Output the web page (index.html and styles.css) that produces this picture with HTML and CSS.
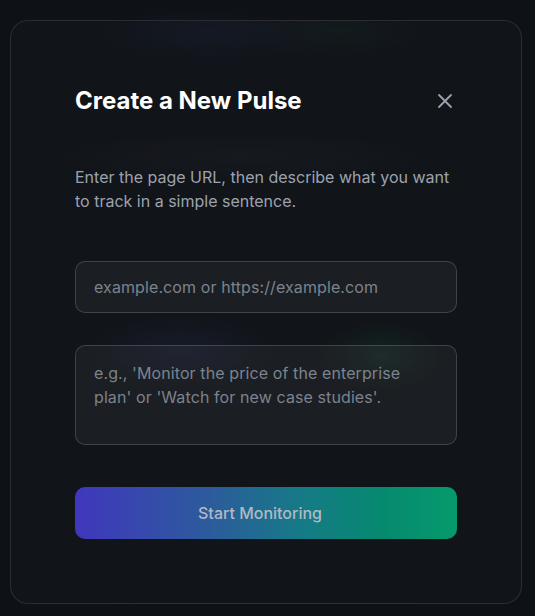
FILE: index.html
```html
<!DOCTYPE html>
<html lang="en">
<head>
<meta charset="utf-8">
<title>Create a New Pulse</title>
<link rel="stylesheet" href="styles.css">
</head>
<body>
<div class="overlay">
  <div class="modal">
    <div class="modal-header">
      <h2 class="modal-title">Create a New Pulse</h2>
      <button class="close-btn" aria-label="Close">
        <svg width="16" height="16" viewBox="0 0 16 16" fill="none" stroke="currentColor" stroke-width="1.8" stroke-linecap="round"><path d="M2 2L14 14M14 2L2 14"/></svg>
      </button>
    </div>
    <p class="modal-desc">Enter the page URL, then describe what you want to track in a simple sentence.</p>
    <form class="modal-form">
      <input class="field" type="text" placeholder="example.com or https://example.com">
      <textarea class="field field-area" placeholder="e.g., 'Monitor the price of the enterprise plan' or 'Watch for new case studies'."></textarea>
      <button type="button" class="submit-btn">Start Monitoring</button>
    </form>
  </div>
</div>
</body>
</html>
```
FILE: styles.css
```css
* { box-sizing: border-box; }
html, body { margin: 0; height: 100%; }
body {
  background:
    radial-gradient(ellipse 140px 40px at 200px 30px, rgba(40,60,120,0.12), transparent 70%),
    #0e1115;
  font-family: Inter, "Noto Sans", sans-serif;
  color: #e5e7eb;
}
.overlay {
  padding: 20px 0 0 10px;
}
.modal {
  width: 512px;
  height: 584px;
  border: 1px solid rgba(255,255,255,0.11);
  border-radius: 18px;
  padding: 64px;
  background:
    radial-gradient(ellipse 150px 40px at 200px 10px, rgba(50,70,140,0.10), transparent 80%),
    radial-gradient(ellipse 120px 35px at 330px 10px, rgba(40,110,80,0.07), transparent 80%),
    radial-gradient(ellipse 240px 30px at 230px 135px, rgba(120,130,150,0.05), transparent 80%),
    radial-gradient(ellipse 120px 45px at 170px 330px, rgba(60,80,160,0.12), transparent 80%),
    radial-gradient(ellipse 80px 45px at 370px 335px, rgba(40,140,90,0.12), transparent 80%),
    #111419;
}
.modal-header {
  display: flex;
  align-items: center;
  justify-content: space-between;
  height: 32px;
  margin-bottom: 48px;
}
.modal-title {
  margin: 0;
  font-size: 24px;
  line-height: 32px;
  font-weight: 700;
  color: #ffffff;
  letter-spacing: 0;
}
.close-btn {
  background: none;
  border: none;
  padding: 0;
  margin-right: 4px;
  width: 16px;
  height: 16px;
  color: #9aa3b0;
  display: flex;
}
.modal-desc {
  margin: 0 0 48px;
  font-size: 16px;
  line-height: 24px;
  color: #9ca3af;
}
.modal-form {
  display: flex;
  flex-direction: column;
}
.field {
  width: 100%;
  height: 52px;
  border: 1px solid rgba(255,255,255,0.16);
  border-radius: 10px;
  background: rgba(255,255,255,0.045);
  padding: 13px 18px;
  font-family: Inter, "Noto Sans", sans-serif;
  font-size: 16px;
  line-height: 24px;
  letter-spacing: 0.1px;
  color: #e5e7eb;
  outline: none;
}
.field::placeholder { color: #7b838f; }
.field-area {
  margin-top: 32px;
  height: 100px;
  padding: 15px 18px;
  resize: none;
}
.submit-btn {
  margin-top: 42px;
  height: 52px;
  border: none;
  border-radius: 10px;
  padding: 0 12px 0 0;
  background: linear-gradient(90deg, #4037bd 0%, #2c5b9c 35%, #157b86 60%, #06896f 80%, #059a6c 100%);
  color: #b2b9c3;
  font-family: Inter, "Noto Sans", sans-serif;
  font-size: 16px;
  font-weight: 500;
}
```
